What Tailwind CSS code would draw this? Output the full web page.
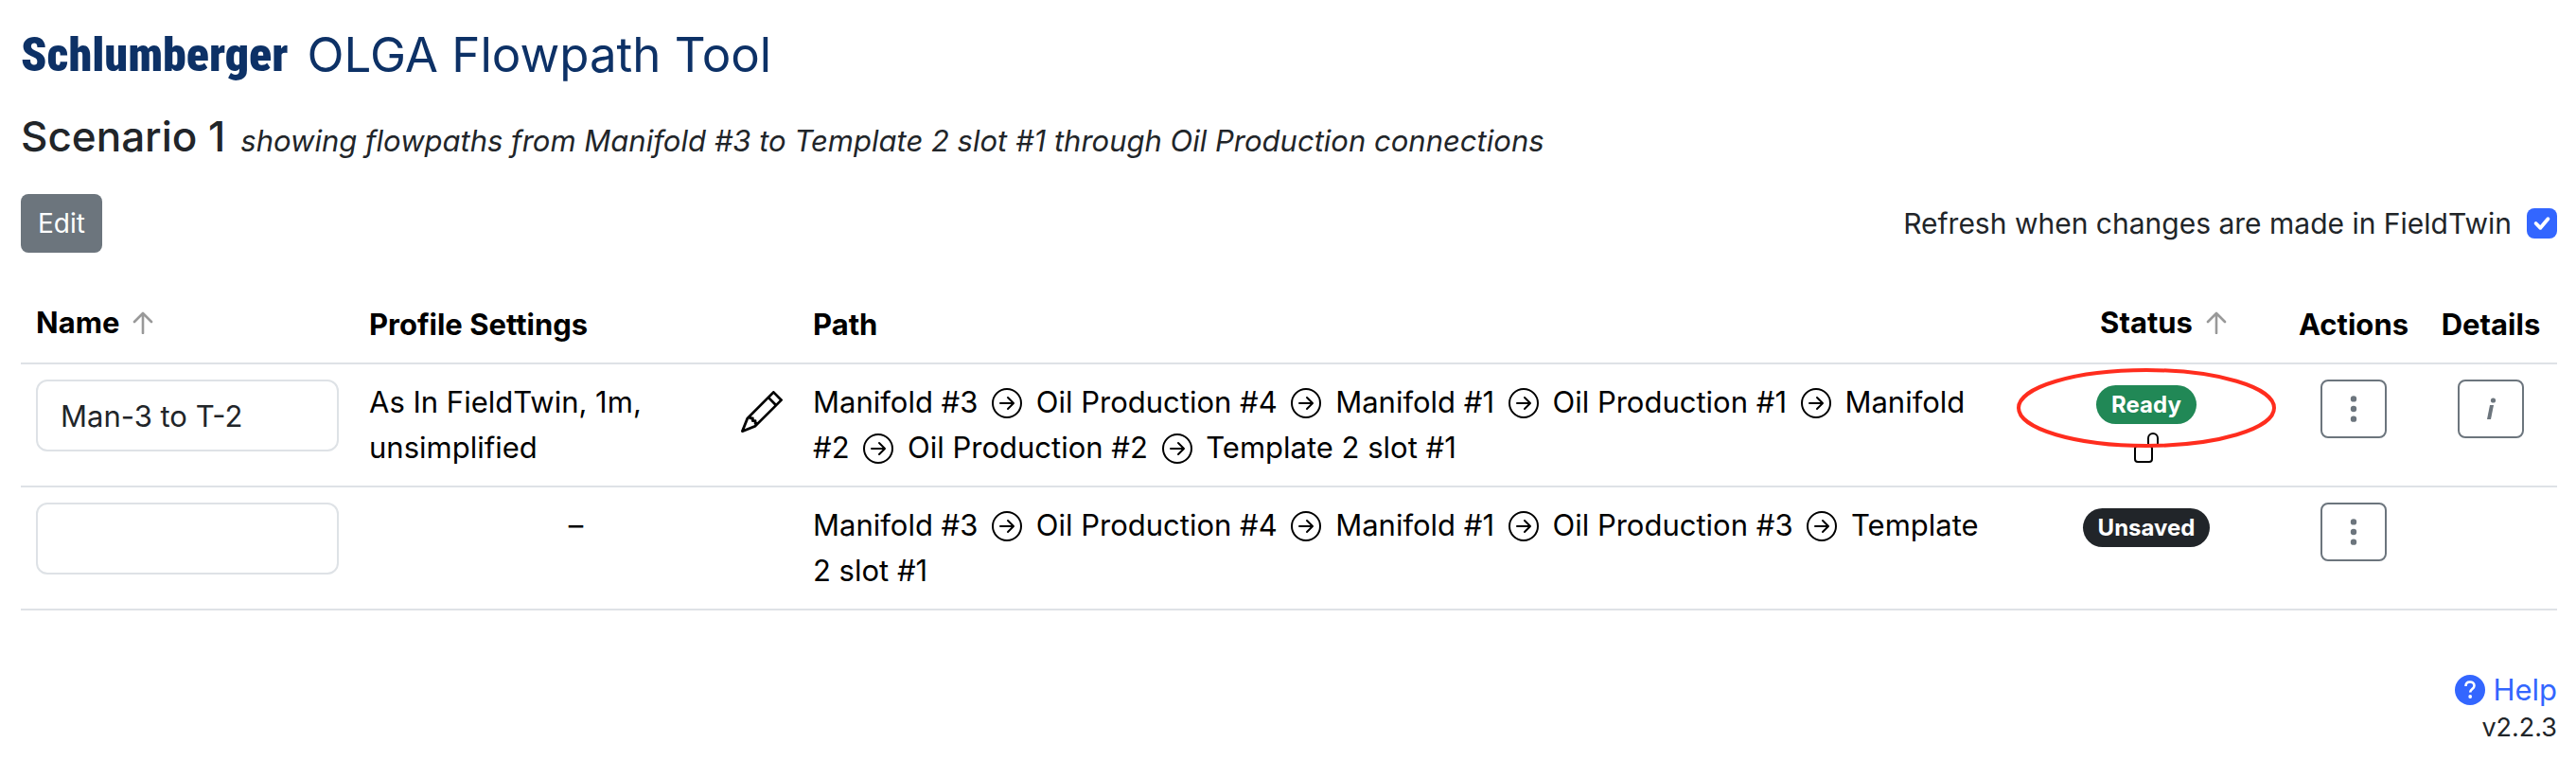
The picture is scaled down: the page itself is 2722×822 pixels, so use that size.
<!DOCTYPE html>
<html lang="en">
<head>
    <meta charset="UTF-8">
    <meta name="viewport" content="width=device-width, initial-scale=1.0">
    <title>OLGA Flowpath Tool</title>
    <script src="https://cdn.jsdelivr.net/npm/@tailwindcss/browser@4"></script>
</head>
<body class="bg-white text-[#212529] font-[Inter,'Liberation_Sans',sans-serif] text-[31px] leading-[48px] pl-[22px] pr-5 py-[18px]">

    <!-- Shared icons -->
    <svg class="hidden">
        <symbol id="arrow-circle" viewBox="0 0 16 16">
            <path fill-rule="evenodd" d="M1 8a7 7 0 1 0 14 0A7 7 0 0 0 1 8m15 0A8 8 0 1 1 0 8a8 8 0 0 1 16 0M4.5 7.5a.5.5 0 0 0 0 1h5.793l-2.147 2.146a.5.5 0 0 0 .708.708l3-3a.5.5 0 0 0 0-.708l-3-3a.5.5 0 1 0-.708.708L10.293 7.5z"/>
        </symbol>
        <symbol id="arrow-up" viewBox="0 0 22 24">
            <path d="M11 23V2M2 11l9-9 9 9" fill="none" stroke="currentColor" stroke-width="2.6" stroke-linecap="round" stroke-linejoin="round"/>
        </symbol>
        <symbol id="dots" viewBox="0 0 16 16">
            <path d="M9.5 13a1.5 1.5 0 1 1-3 0 1.5 1.5 0 0 1 3 0m0-5a1.5 1.5 0 1 1-3 0 1.5 1.5 0 0 1 3 0m0-5a1.5 1.5 0 1 1-3 0 1.5 1.5 0 0 1 3 0"/>
        </symbol>
    </svg>

    <!-- Header -->
    <header class="flex items-center gap-5 h-20 text-[#0d3166] leading-[80px]">
        <span class="font-['Roboto_Condensed','Liberation_Sans',sans-serif] font-black text-[50px]">Schlumberger</span>
        <h1 class="text-[51px]">OLGA Flowpath Tool</h1>
    </header>

    <div class="flex items-baseline gap-4 mt-4 leading-[60px]">
        <h2 class="text-[44px] font-medium">Scenario 1</h2>
        <em>showing flowpaths from Manifold #3 to Template 2 slot #1 through Oil Production connections</em>
    </div>

    <!-- Toolbar -->
    <div class="flex justify-between items-center mt-[26px]">
        <button class="h-[62px] px-[18px] rounded-lg bg-[#6c757d] text-white text-[28px]">Edit</button>
        <div class="flex items-center gap-4">
            <label for="refresh" class="text-[30px]">Refresh when changes are made in FieldTwin</label>
            <span class="relative flex">
                <input id="refresh" type="checkbox" checked class="appearance-none size-8 rounded-lg bg-[#3366ff]">
                <svg class="absolute inset-0 size-8 pointer-events-none" viewBox="0 0 20 20" fill="none" stroke="#fff" stroke-width="2.4" stroke-linecap="round" stroke-linejoin="round"><path d="m6 10 3 3 5-6"/></svg>
            </span>
        </div>
    </div>

    <!-- Flowpaths -->
    <table class="w-full table-fixed mt-9 text-black border-collapse">
        <colgroup>
            <col class="w-[352px]">
            <col class="w-[469px]">
            <col>
            <col class="w-[288px]">
            <col class="w-[150px]">
            <col class="w-[140px]">
        </colgroup>
        <thead>
            <tr class="border-b-2 border-[#dee2e6] text-left [&>th]:p-4 [&>th]:font-bold">
                <th><span class="flex items-center gap-[14px] h-12 pb-1">Name <svg class="w-[22px] h-6 text-[#999]"><use href="#arrow-up"/></svg></span></th>
                <th>Profile Settings</th>
                <th>Path</th>
                <th><span class="flex items-center justify-center gap-[14px] h-12 pb-1 pl-9">Status <svg class="w-[22px] h-6 text-[#999]"><use href="#arrow-up"/></svg></span></th>
                <th><span class="flex justify-center">Actions</span></th>
                <th><span class="flex justify-center">Details</span></th>
            </tr>
        </thead>
        <tbody class="align-top">
            <tr class="border-b-2 border-[#dee2e6] [&>td]:p-4">
                <td><input type="text" aria-label="Name" value="Man-3 to T-2" class="block w-full h-[76px] px-6 rounded-xl border-2 border-[#dee2e6] text-[#212529]"></td>
                <td>
                    <div class="flex justify-between gap-4">
                        <span class="w-[300px]">As In FieldTwin, 1m, unsimplified</span>
                        <button aria-label="Edit profile settings" class="self-start mt-3">
                            <svg class="size-11" viewBox="0 0 16 16"><path d="M12.146.146a.5.5 0 0 1 .708 0l3 3a.5.5 0 0 1 0 .708l-10 10a.5.5 0 0 1-.168.11l-5 2a.5.5 0 0 1-.65-.65l2-5a.5.5 0 0 1 .11-.168zM11.207 2.5 13.5 4.793 14.793 3.5 12.5 1.207zm1.586 3L10.5 3.207 4 9.707V10h.5a.5.5 0 0 1 .5.5v.5h.5a.5.5 0 0 1 .5.5v.5h.293zm-9.761 5.175-.106.106-1.528 3.821 3.821-1.528.106-.106A.5.5 0 0 1 5 12.5V12h-.5a.5.5 0 0 1-.5-.5V11h-.5a.5.5 0 0 1-.468-.325"/></svg>
                        </button>
                    </div>
                </td>
                <td>
                    Manifold #3 <svg class="inline size-8 mx-[6px] -mt-1"><use href="#arrow-circle"/></svg>
                    Oil Production #4 <svg class="inline size-8 mx-[6px] -mt-1"><use href="#arrow-circle"/></svg>
                    Manifold #1 <svg class="inline size-8 mx-[6px] -mt-1"><use href="#arrow-circle"/></svg>
                    Oil Production #1 <svg class="inline size-8 mx-[6px] -mt-1"><use href="#arrow-circle"/></svg>
                    Manifold #2 <svg class="inline size-8 mx-[6px] -mt-1"><use href="#arrow-circle"/></svg>
                    Oil Production #2 <svg class="inline size-8 mx-[6px] -mt-1"><use href="#arrow-circle"/></svg>
                    Template 2 slot #1
                </td>
                <td>
                    <div class="relative flex flex-col items-center pt-[6px]">
                        <span class="rounded-full bg-[#218856] text-white font-bold text-[24px] leading-[41px] px-4">Ready</span>
                        <svg class="w-[28px] h-[34px] mt-2" viewBox="0 0 28 34" fill="none" stroke="#000" stroke-width="2"><rect x="2" y="15" width="18" height="17" rx="3"/><path d="M16 15V7a5 5 0 0 1 10 0v8"/></svg>
                        <!-- Highlight ring -->
                        <svg class="absolute left-1/2 -top-3 -translate-x-1/2 w-[274px] h-[84px] pointer-events-none" viewBox="0 0 274 84" fill="none"><ellipse cx="137" cy="42" rx="135" ry="40" stroke="#ff2d1e" stroke-width="4"/></svg>
                    </div>
                </td>
                <td>
                    <button aria-label="Actions" class="flex items-center justify-center mx-auto w-[70px] h-[62px] rounded-lg border-2 border-[#6c757d] text-[#6c757d]">
                        <svg class="size-[34px]" fill="currentColor"><use href="#dots"/></svg>
                    </button>
                </td>
                <td>
                    <button aria-label="Details" class="flex items-center justify-center mx-auto w-[70px] h-[62px] rounded-lg border-2 border-[#6c757d] text-[#6c757d]">
                        <svg class="w-3 h-6" viewBox="0 0 12 24" fill="currentColor"><circle cx="8.500" cy="3" r="2.600"/><path d="M5 8h4L6 23H2z"/></svg>
                    </button>
                </td>
            </tr>
            <tr class="border-b-2 border-[#dee2e6] [&>td]:p-4">
                <td><input type="text" aria-label="Name" class="block w-full h-[76px] px-6 rounded-xl border-2 border-[#dee2e6] text-[#212529]"></td>
                <td class="text-center">–</td>
                <td>
                    Manifold #3 <svg class="inline size-8 mx-[6px] -mt-1"><use href="#arrow-circle"/></svg>
                    Oil Production #4 <svg class="inline size-8 mx-[6px] -mt-1"><use href="#arrow-circle"/></svg>
                    Manifold #1 <svg class="inline size-8 mx-[6px] -mt-1"><use href="#arrow-circle"/></svg>
                    Oil Production #3 <svg class="inline size-8 mx-[6px] -mt-1"><use href="#arrow-circle"/></svg>
                    Template <br>2 slot #1
                </td>
                <td>
                    <div class="flex flex-col items-center pt-[6px]">
                        <span class="rounded-full bg-[#212529] text-white font-bold text-[24px] leading-[41px] px-4">Unsaved</span>
                    </div>
                </td>
                <td>
                    <button aria-label="Actions" class="flex items-center justify-center mx-auto w-[70px] h-[62px] rounded-lg border-2 border-[#6c757d] text-[#6c757d]">
                        <svg class="size-[34px]" fill="currentColor"><use href="#dots"/></svg>
                    </button>
                </td>
                <td></td>
            </tr>
        </tbody>
    </table>

    <!-- Footer -->
    <footer class="flex flex-col items-end mt-[60px]">
        <a href="#" class="flex items-center gap-2 text-[#3366ff]">
            <svg class="size-8" viewBox="0 0 32 32"><circle cx="16" cy="16" r="16" fill="currentColor"/><path d="M11.500 12c0-3 2-4.500 4.500-4.500s4.500 1.500 4.500 4c0 3.500-4.300 3.500-4.300 7" fill="none" stroke="#fff" stroke-width="2.600"/><circle cx="16.200" cy="23" r="1.900" fill="#fff"/></svg>
            Help
        </a>
        <span class="text-[27px] leading-8">v2.2.3</span>
    </footer>
</body>
</html>
